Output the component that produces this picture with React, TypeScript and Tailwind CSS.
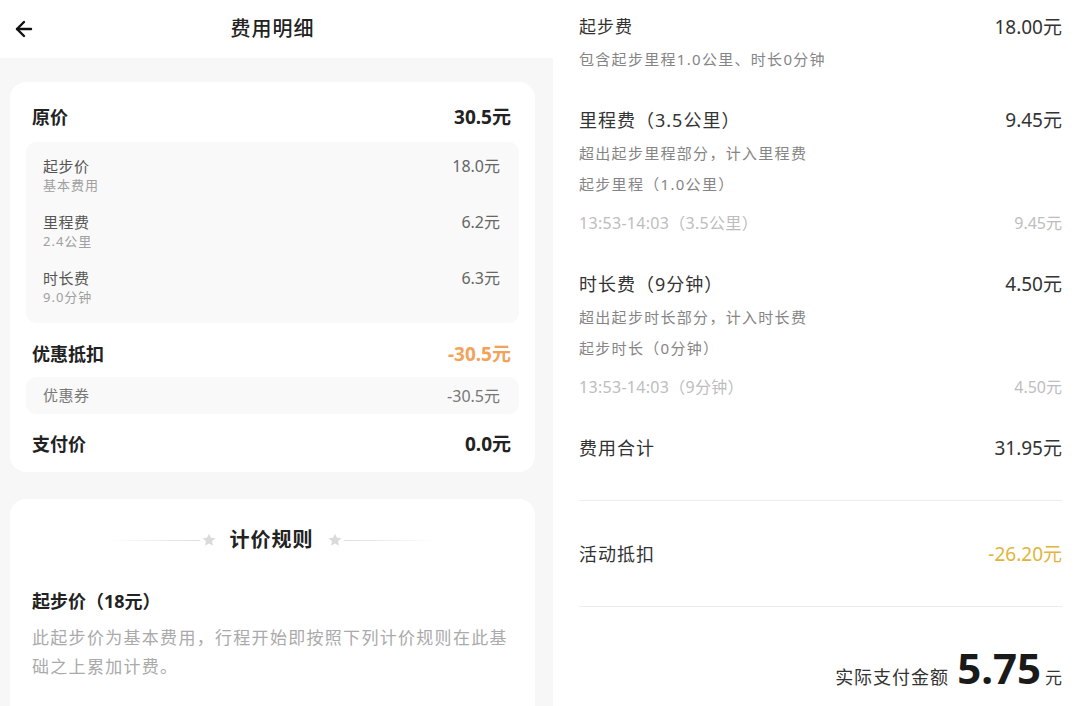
import React from "react";
import { ArrowLeft } from "lucide-react";

const font = { fontFamily: '"Noto Sans", "Noto Sans CJK SC", sans-serif' };

type Item = { title: string; sub: string; value: string };

const baseItems: Item[] = [
  { title: "起步价", sub: "基本费用", value: "18.0元" },
  { title: "里程费", sub: "2.4公里", value: "6.2元" },
  { title: "时长费", sub: "9.0分钟", value: "6.3元" },
];

function Star() {
  return (
    <svg width="16" height="16" viewBox="0 0 24 24" className="shrink-0">
      <path
        d="M12 2.5l2.9 6.1 6.6.8-4.9 4.6 1.3 6.6L12 17.3l-5.9 3.3 1.3-6.6-4.9-4.6 6.6-.8z"
        fill="#dadada"
      />
    </svg>
  );
}

function LeftPanel() {
  return (
    <div className="w-[553px] shrink-0 bg-[#f7f7f7] h-full flex flex-col">
      {/* Header */}
      <div className="h-[58px] bg-white flex items-center px-3">
        <ArrowLeft size={26} strokeWidth={2.4} className="text-[#111] w-[24px]" />
        <div className="flex-1 text-center text-[20px] font-medium text-[#222] tracking-[1px] pr-[32px]">
          费用明细
        </div>
      </div>

      {/* Fee card */}
      <div className="w-[525px] ml-[10px] mt-[24px] bg-white rounded-[16px] pt-[20px] pb-[13px]">
        <div className="flex items-center justify-between h-[30px] pl-[22px] pr-[24px]">
          <span className="text-[18px] font-bold text-[#222]">原价</span>
          <span className="text-[19px] font-bold text-[#222]">30.5元</span>
        </div>

        <div className="mx-[16px] mt-[10px] bg-[#f9f9f9] rounded-[10px] pt-[14px] pb-[17px] pl-[17px] pr-[19px] flex flex-col gap-[18px]">
          {baseItems.map((it) => (
            <div key={it.title} className="flex justify-between items-start">
              <div className="flex flex-col">
                <span className="text-[15px] leading-[20px] text-[#555] tracking-[0.5px]">{it.title}</span>
                <span className="text-[13px] leading-[18px] text-[#a0a0a0] tracking-[1px]">{it.sub}</span>
              </div>
              <span className="text-[16px] leading-[20px] text-[#666]">{it.value}</span>
            </div>
          ))}
        </div>

        <div className="flex items-center justify-between h-[30px] pl-[22px] pr-[24px] mt-[16px]">
          <span className="text-[18px] font-bold text-[#222]">优惠抵扣</span>
          <span className="text-[19px] font-bold text-[#f3a25c]">-30.5元</span>
        </div>

        <div className="mx-[16px] mt-[8px] bg-[#f9f9f9] rounded-[10px] h-[37px] pl-[17px] pr-[19px] flex items-center justify-between">
          <span className="text-[15px] text-[#777] tracking-[0.5px]">优惠券</span>
          <span className="text-[16px] text-[#777]">-30.5元</span>
        </div>

        <div className="flex items-center justify-between h-[30px] pl-[22px] pr-[24px] mt-[15px]">
          <span className="text-[18px] font-bold text-[#222]">支付价</span>
          <span className="text-[19px] font-bold text-[#222]">0.0元</span>
        </div>
      </div>

      {/* Pricing rules card */}
      <div className="w-[525px] ml-[10px] mt-[27px] bg-white rounded-t-[16px] flex-1 pt-[26px] pl-[22px] pr-[24px]">
        <div className="flex items-center justify-center h-[30px]">
          <div className="w-[92px] h-px bg-gradient-to-r from-transparent to-[#dedede]" />
          <div className="mx-[1px]"><Star /></div>
          <span className="mx-[12px] text-[20px] font-bold text-[#222] tracking-[1px]">计价规则</span>
          <div className="mx-[1px]"><Star /></div>
          <div className="w-[92px] h-px bg-gradient-to-l from-transparent to-[#dedede]" />
        </div>
        <div className="mt-[33px] text-[18px] leading-[26px] font-bold text-[#222]">起步价（18元）</div>
        <p className="mt-[9px] text-[17px] leading-[29px] text-[#aaa] tracking-[1.3px]">
          此起步价为基本费用，行程开始即按照下列计价规则在此基础之上累加计费。
        </p>
      </div>
    </div>
  );
}

function Row({ label, value, big = false, valueClass = "text-[#333]" }: { label: string; value: string; big?: boolean; valueClass?: string }) {
  return (
    <div className="flex items-center justify-between h-[26px]">
      <span className={`${big ? "text-[18px]" : "text-[17px]"} text-[#333] tracking-[1px]`}>{label}</span>
      <span className={`text-[19px] ${valueClass}`}>{value}</span>
    </div>
  );
}

function Sub({ children, className = "" }: { children: React.ReactNode; className?: string }) {
  return <div className={`h-[24px] flex items-center text-[15px] text-[#858585] tracking-[1.3px] ${className}`}>{children}</div>;
}

function TimeRow({ label, value }: { label: string; value: string }) {
  return (
    <div className="h-[24px] flex items-center justify-between text-[16px] text-[#bdbdbd]">
      <span className="tracking-[0.3px]">{label}</span>
      <span>{value}</span>
    </div>
  );
}

function RightPanel() {
  return (
    <div className="flex-1 bg-white h-full pl-[26px] pr-[18px] pt-[14px]">
      <Row label="起步费" value="18.00元" />
      <Sub className="mt-[7px]">包含起步里程1.0公里、时长0分钟</Sub>

      <div className="mt-[36px]">
        <Row label="里程费（3.5公里）" value="9.45元" big />
      </div>
      <Sub className="mt-[8px]">超出起步里程部分，计入里程费</Sub>
      <Sub className="mt-[7px]">起步里程（1.0公里）</Sub>
      <div className="mt-[15px]">
        <TimeRow label="13:53-14:03（3.5公里）" value="9.45元" />
      </div>

      <div className="mt-[36px]">
        <Row label="时长费（9分钟）" value="4.50元" big />
      </div>
      <Sub className="mt-[8px]">超出起步时长部分，计入时长费</Sub>
      <Sub className="mt-[7px]">起步时长（0分钟）</Sub>
      <div className="mt-[15px]">
        <TimeRow label="13:53-14:03（9分钟）" value="4.50元" />
      </div>

      <div className="mt-[36px]">
        <Row label="费用合计" value="31.95元" big />
      </div>

      <div className="mt-[39px] h-px bg-[#ececec]" />

      <div className="mt-[40px]">
        <Row label="活动抵扣" value="-26.20元" big valueClass="text-[#e2b43a]" />
      </div>

      <div className="mt-[39px] h-px bg-[#ececec]" />

      <div className="mt-[40px] flex items-baseline justify-end leading-none">
        <span className="text-[18px] text-[#333] tracking-[1px]">实际支付金额</span>
        <span className="ml-[8px] text-[42px] font-bold text-[#1a1a1a]">5.75</span>
        <span className="ml-[4px] text-[17px] text-[#333]">元</span>
      </div>
    </div>
  );
}

export default function App() {
  return (
    <div className="w-[1080px] h-[706px] overflow-hidden flex bg-white" style={font}>
      <LeftPanel />
      <RightPanel />
    </div>
  );
}
